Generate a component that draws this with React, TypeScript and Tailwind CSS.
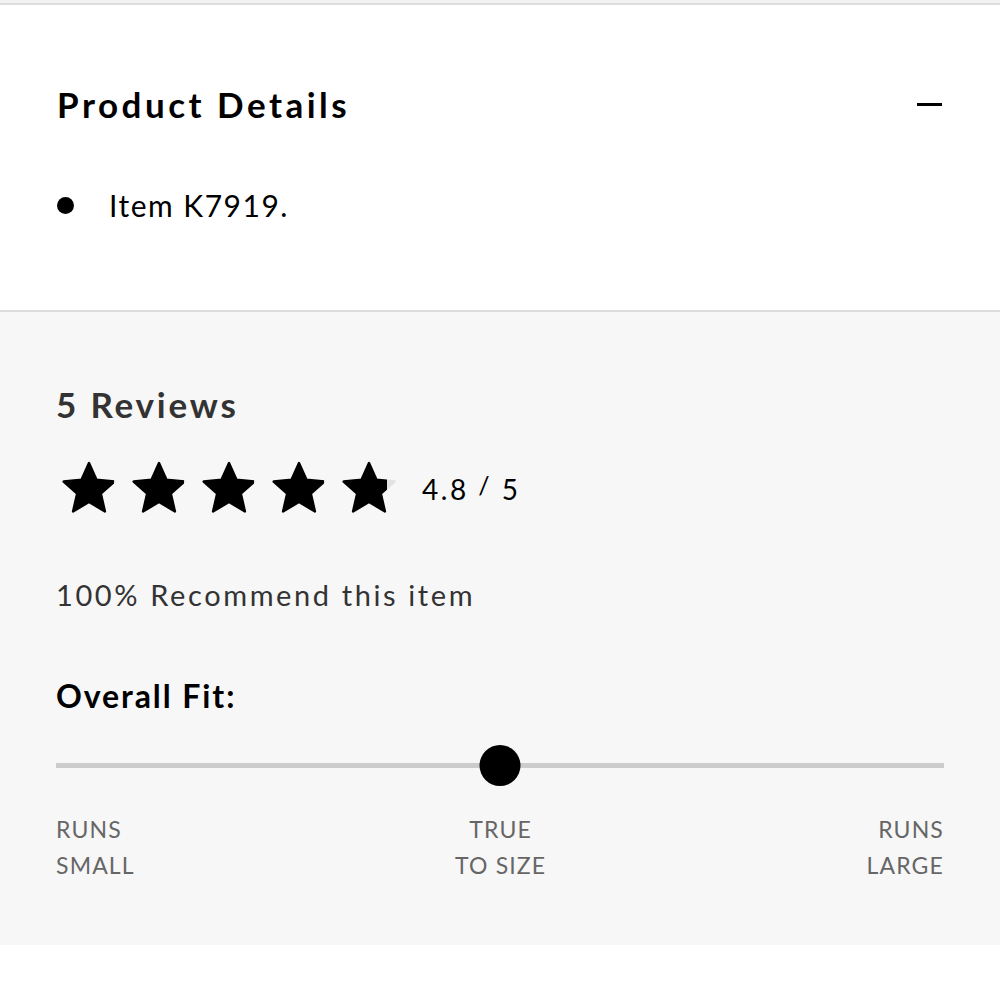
import React from "react";

const font = { fontFamily: "Lato, 'Noto Sans', sans-serif" };

function Star({ fill = 1, id }: { fill?: number; id: string }) {
  return (
    <svg width="58" height="56" viewBox="0 0 24 23">
      <defs>
        <linearGradient id={id} x1="0" x2="1" y1="0" y2="0">
          <stop offset={fill} stopColor="#000" />
          <stop offset={fill} stopColor="#e2e2e2" />
        </linearGradient>
      </defs>
      <path
        d="M12 1.2l3.1 6.9 7.4.7-5.6 5 1.7 7.4L12 17.3l-6.6 3.9 1.7-7.4-5.6-5 7.4-.7z"
        fill={`url(#${id})`}
        stroke={`url(#${id})`}
        strokeWidth="1"
        strokeLinejoin="round"
      />
    </svg>
  );
}

export default function App() {
  const stars = [1, 1, 1, 1, 0.86];
  return (
    <div className="w-[1000px] bg-white" style={font}>
      <div className="h-[3px] bg-[#f2f2f2]" />
      <section className="border-t-2 border-[#dcdcdc] px-[57px] pt-[79px] pb-[85px]">
        <div className="flex items-center justify-between h-[40px]">
          <h2 className="text-[35px] leading-[40px] font-bold text-black tracking-[0.1em]">Product Details</h2>
          <span className="block w-[25px] h-[3px] bg-black mr-[1px]" />
        </div>
        <ul className="mt-[61px]">
          <li className="flex items-center h-[40px] text-[30px] text-black tracking-[0.05em]">
            <span className="block w-[17px] h-[17px] rounded-full bg-black mr-[35px]" />
            Item K7919.
          </li>
        </ul>
      </section>

      <section className="border-t-2 border-[#dcdcdc] bg-[#f7f7f7] px-[56px] pt-[72px] pb-[62px]">
        <h3 className="text-[35px] leading-[40px] font-bold text-[#333] tracking-[0.08em]">5 Reviews</h3>
        <div className="mt-[36px] flex items-center h-[56px]">
          <div className="flex gap-[12px] ml-[4px]">
            {stars.map((s, i) => (
              <Star key={i} fill={s} id={`st${i}`} />
            ))}
          </div>
          <span className="ml-[24px] text-[28px] text-black mt-[2px] tracking-[0.09em]">
            4.8 <span className="relative -top-[5px] text-[25px]">/</span> 5
          </span>
        </div>
        <p className="mt-[61px] text-[29px] leading-[36px] text-[#333] tracking-[0.09em]">100% Recommend this item</p>
        <h4 className="mt-[63px] text-[32px] leading-[40px] font-bold text-black tracking-[0.06em]">Overall Fit:</h4>
        <div className="mt-[29px] relative h-[40px] flex items-center">
          <div className="w-full h-[5px] bg-[#cccccc]" />
          <span className="absolute left-1/2 -translate-x-1/2 top-0 w-[41px] h-[41px] rounded-full bg-black" />
        </div>
        <div className="mt-[26px] flex justify-between text-[23px] leading-[36px] text-[#666] uppercase tracking-[0.05em]">
          <span className="text-left">Runs<br />Small</span>
          <span className="text-center">True<br />To Size</span>
          <span className="text-right">Runs<br />Large</span>
        </div>
      </section>
    </div>
  );
}
